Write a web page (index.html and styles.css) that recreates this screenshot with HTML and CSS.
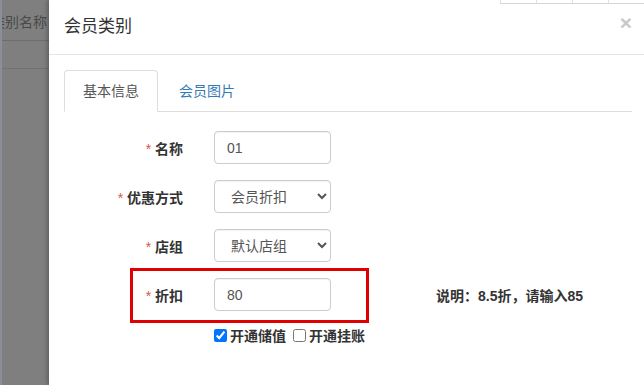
FILE: index.html
```html
<!DOCTYPE html>
<html lang="zh-CN">
  <head>
    <meta charset="UTF-8" />
    <meta name="viewport" content="width=device-width, initial-scale=1.0" />
    <title>会员类别</title>
    <link rel="stylesheet" href="styles.css">
  </head>
  <body>
    <div class="page">
      <div class="backdrop">
        <div class="bg-head">类别名称</div>
        <div class="bg-row"></div>
      </div>
      <div class="modal">
        <div class="modal-header">
          <div class="bg-ticks"><span></span><span></span><span></span><span></span></div>
          <h4 class="modal-title">会员类别</h4>
          <button class="close">&times;</button>
        </div>
        <div class="modal-body">
          <ul class="tabs">
            <li class="tab active">基本信息</li>
            <li class="tab">会员图片</li>
          </ul>
          <form class="form">
            <div class="row">
              <label class="label"><i>*</i> 名称</label>
              <input class="control" type="text" value="01">
            </div>
            <div class="row">
              <label class="label"><i>*</i> 优惠方式</label>
              <select class="control select"><option>会员折扣</option></select>
            </div>
            <div class="row">
              <label class="label"><i>*</i> 店组</label>
              <select class="control select shop"><option>默认店组</option></select>
            </div>
            <div class="row highlight">
              <div class="mark"></div>
              <label class="label"><i>*</i> 折扣</label>
              <input class="control" type="text" value="80">
              <span class="hint">说明：8.5折，请输入85</span>
            </div>
            <div class="checks">
              <label><input type="checkbox" checked> 开通储值</label>
              <label><input type="checkbox"> 开通挂账</label>
            </div>
          </form>
        </div>
      </div>
    </div>
  </body>
</html>
```

FILE: styles.css
```css
* {
  margin: 0;
  padding: 0;
  box-sizing: border-box;
}

body {
  font-family: "Liberation Sans", Arial, "Noto Sans CJK SC", sans-serif;
  font-size: 14px;
  color: #333;
  background-color: #fff;
  overflow: hidden;
}

.page {
  display: flex;
  height: 385px;
}

.backdrop {
  width: 49px;
  flex-shrink: 0;
  background-color: #7f7f7f;
  border-left: 2px solid #8a9096;
  overflow: hidden;
}

.bg-head {
  height: 41px;
  line-height: 44px;
  margin-left: -11px;
  white-space: nowrap;
  font-size: 14px;
  color: #4a4a4a;
  border-bottom: 1px solid #6e6e6e;
}

.bg-row {
  height: 28px;
  border-bottom: 1px solid #727272;
}

.modal {
  flex: 1;
  background-color: #fff;
  box-shadow: -2px 0 4px rgba(0, 0, 0, 0.25);
}

.modal-header {
  position: relative;
  display: flex;
  align-items: center;
  justify-content: space-between;
  height: 55px;
  padding: 0 12px 0 15px;
  border-bottom: 1px solid #e5e5e5;
}

.bg-ticks {
  position: absolute;
  top: 0;
  right: 0;
  width: 144px;
  height: 4px;
  display: flex;
  border-bottom: 1px solid #d6d6d6;
}

.bg-ticks span {
  flex: 1;
  border-left: 1px solid #e2e2e2;
}

.modal-title {
  font-size: 17px;
  font-weight: normal;
  color: #333;
  margin-top: -6px;
}

.close {
  border: none;
  background: none;
  font-size: 21px;
  font-weight: bold;
  color: #c8c8c8;
  margin-top: -8px;
  cursor: pointer;
}

.modal-body {
  padding: 15px 12px 0 15px;
}

.tabs {
  display: flex;
  list-style: none;
  border-bottom: 1px solid #ddd;
  height: 42px;
}

.tab {
  padding: 0 18px;
  height: 42px;
  line-height: 40px;
  margin-right: 2px;
  color: #337ab7;
  border: 1px solid transparent;
  border-radius: 4px 4px 0 0;
  cursor: pointer;
}

.tab.active {
  color: #555;
  background-color: #fff;
  border-color: #ddd;
  border-bottom-color: #fff;
}

.form {
  padding-top: 19px;
}

.row {
  display: flex;
  align-items: center;
  height: 33px;
  margin-bottom: 16px;
}

.label {
  width: 119px;
  text-align: right;
  font-weight: bold;
  color: #333;
  margin-right: 31px;
}

.label i {
  font-style: normal;
  font-weight: normal;
  color: #d9534f;
}

.control {
  width: 117px;
  height: 33px;
  padding: 0 12px;
  font-family: inherit;
  font-size: 14px;
  color: #555;
  border: 1px solid #ccc;
  border-radius: 4px;
  background-color: #fff;
  box-shadow: inset 0 1px 1px rgba(0, 0, 0, 0.05);
}

.select {
  padding: 0 4px 0 12px;
}

.highlight {
  position: relative;
  margin-bottom: 14px;
}

.mark {
  position: absolute;
  left: 66px;
  top: -10px;
  width: 239px;
  height: 55px;
  border: 3px solid #e00000;
  pointer-events: none;
}

.hint {
  margin-left: 105px;
  font-size: 14px;
  font-weight: bold;
  color: #333;
}

.checks {
  display: flex;
  gap: 7px;
  margin-left: 150px;
  font-size: 14px;
  font-weight: bold;
  color: #333;
}

.checks label {
  display: flex;
  align-items: center;
  gap: 3px;
}

.checks input {
  width: 13px;
  height: 13px;
  margin: 0;
}
```
